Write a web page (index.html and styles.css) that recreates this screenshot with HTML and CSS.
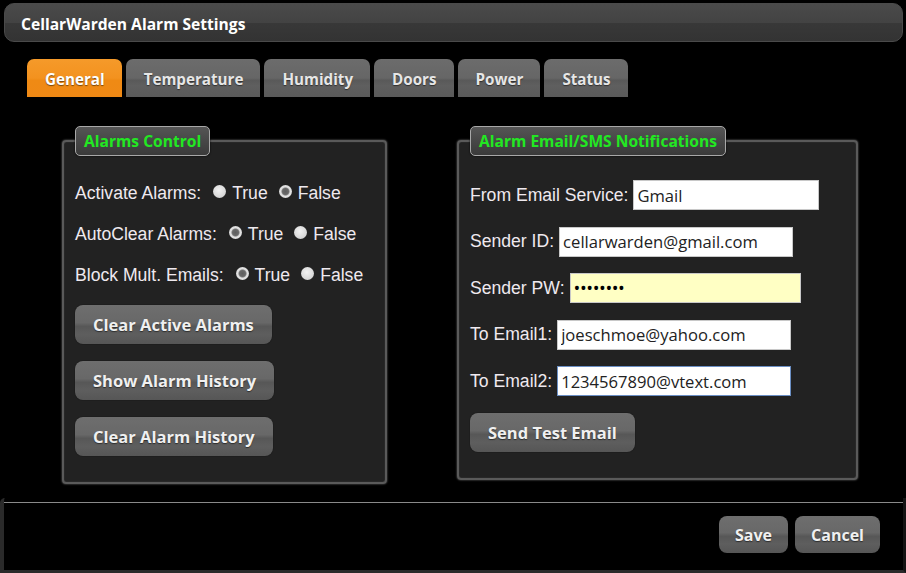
FILE: index.html
```html
<!DOCTYPE html>
<html>
<head>
<meta charset="utf-8">
<title>CellarWarden Alarm Settings</title>
<link rel="stylesheet" href="styles.css">
</head>
<body>
<div class="window">
  <div class="titlebar">CellarWarden Alarm Settings</div>
  <div class="tabs">
    <div class="tab active">General</div>
    <div class="tab">Temperature</div>
    <div class="tab">Humidity</div>
    <div class="tab">Doors</div>
    <div class="tab">Power</div>
    <div class="tab">Status</div>
  </div>
  <div class="panels">
    <fieldset class="group group-left">
      <legend>Alarms Control</legend>
      <div class="rows rows-left">
        <div class="row">
          <span class="lbl">Activate Alarms:</span>
          <label class="opt"><input type="radio" name="act"><span>True</span></label>
          <label class="opt"><input type="radio" name="act" checked><span>False</span></label>
        </div>
        <div class="row">
          <span class="lbl">AutoClear Alarms:</span>
          <label class="opt"><input type="radio" name="ac" checked><span>True</span></label>
          <label class="opt"><input type="radio" name="ac"><span>False</span></label>
        </div>
        <div class="row">
          <span class="lbl">Block Mult. Emails:</span>
          <label class="opt"><input type="radio" name="bm" checked><span>True</span></label>
          <label class="opt"><input type="radio" name="bm"><span>False</span></label>
        </div>
      </div>
      <div class="btns">
        <button class="btn">Clear Active Alarms</button>
        <button class="btn">Show Alarm History</button>
        <button class="btn">Clear Alarm History</button>
      </div>
    </fieldset>
    <fieldset class="group group-right">
      <legend>Alarm Email/SMS Notifications</legend>
      <div class="rows rows-right">
        <div class="row"><span class="lbl">From Email Service:</span><input class="txt w186" type="text" value="Gmail"></div>
        <div class="row"><span class="lbl">Sender ID:</span><input class="txt w234" type="text" value="cellarwarden@gmail.com"></div>
        <div class="row"><span class="lbl">Sender PW:</span><input class="txt pw w231" type="password" value="password"></div>
        <div class="row"><span class="lbl">To Email1:</span><input class="txt w234" type="text" value="joeschmoe@yahoo.com"></div>
        <div class="row"><span class="lbl">To Email2:</span><input class="txt focus w234" type="text" value="1234567890@vtext.com"></div>
      </div>
      <button class="btn send">Send Test Email</button>
    </fieldset>
  </div>
  <div class="footer">
    <div class="footer-bar">
      <button class="btn small">Save</button>
      <button class="btn small">Cancel</button>
    </div>
  </div>
</div>
</body>
</html>
```

FILE: styles.css
```css
* { box-sizing: border-box; }
html, body { margin: 0; padding: 0; background: #000; }
.window {
  width: 906px;
  height: 573px;
  background: #000;
  display: flex;
  flex-direction: column;
  overflow: hidden;
  font-family: "Liberation Sans", Arial, sans-serif;
}
.titlebar {
  margin: 3px 3px 0 4px;
  height: 39px;
  border-radius: 10px;
  border: 1px solid #4a4a4a;
  background: linear-gradient(#4a4a4a 0%, #434343 50%, #383838 52%, #333 100%);
  color: #fff;
  font-family: "Open Sans", sans-serif;
  font-weight: 700;
  font-size: 15.6px;
  padding-left: 16px;
  display: flex;
  align-items: center;
  padding-top: 2px;
}
.tabs {
  display: flex;
  gap: 4px;
  margin-top: 17px;
  padding-left: 27px;
}
.tab {
  height: 38px;
  padding: 0 17px 0 18px;
  border-radius: 7px 7px 0 0;
  background: linear-gradient(#6c6c6c 0%, #666 50%, #595959 56%, #5f5f5f 70%, #5a5a5a 100%);
  color: #e6e6e6;
  font-family: "Open Sans", sans-serif;
  font-weight: 700;
  font-size: 15.2px;
  display: flex;
  align-items: center;
  padding-top: 2px;
  text-shadow: 0 1px 1px rgba(0,0,0,0.5);
}
.tab.active {
  background: linear-gradient(#f59a2a 0%, #f3921f 50%, #ef8a14 56%, #ef8915 100%);
  color: #fff;
}
.panels {
  display: flex;
  align-items: flex-start;
  gap: 70px;
  padding-left: 62px;
  margin-top: 29px;
  height: 359px;
}
.group {
  margin: 0;
  border: 2px solid #5a5a5a;
  border-radius: 4px;
  background: #222;
  box-shadow: 0 0 2px #7a7a7a, inset 0 0 1px #666;
  padding: 22px 11px 26px 11px;
  min-width: 0;
  display: flex;
  flex-direction: column;
  align-items: flex-start;
}
.group-left { width: 325px; }
.group-right { width: 401px; padding-top: 24px; }
legend {
  height: 30px;
  padding: 0 8px;
  border: 1px solid #a8a8a8;
  border-radius: 5px;
  background: linear-gradient(#555 0%, #474747 50%, #3a3a3a 100%);
  color: #22e822;
  font-family: "Open Sans", sans-serif;
  font-weight: 700;
  font-size: 15.6px;
  line-height: 29px;
  box-shadow: 0 0 2px #000;
}
.rows { display: flex; flex-direction: column; }
.rows-left { gap: 11px; }
.rows-right { gap: 16.5px; }
.row {
  height: 30px;
  display: flex;
  align-items: center;
  color: #efe9ef;
  font-size: 17.6px;
  white-space: nowrap;
}
.rows-right .row { gap: 5px; }
.opt {
  display: flex;
  align-items: center;
  gap: 6px;
  margin-left: 11px;
}
.lbl + .opt { margin-left: 12px; }
.opt input[type="radio"] {
  appearance: none;
  -webkit-appearance: none;
  margin: 0;
  width: 13px;
  height: 13px;
  border-radius: 50%;
  background: radial-gradient(circle at 45% 40%, #f2f2f2 0%, #dadada 60%, #c4c4c4 100%);
  border: none;
  position: relative;
  top: -2px;
}
.opt input[type="radio"]:checked {
  background: radial-gradient(circle, #5e5e5e 0, #6a6a6a 3px, #888 3.6px, #e4e4e4 4.6px, #d0d0d0 100%);
}
.btns {
  display: flex;
  flex-direction: column;
  align-items: flex-start;
  gap: 17px;
  margin-top: 15px;
}
.btn {
  height: 39px;
  padding: 0 18px;
  border: none;
  border-radius: 8px;
  background: linear-gradient(#6e6e6e 0%, #686868 45%, #575757 55%, #5e5e5e 75%, #565656 100%);
  color: #f0f0f0;
  font-family: "Open Sans", sans-serif;
  font-weight: 700;
  font-size: 16.5px;
  text-shadow: 0 1px 1px rgba(0,0,0,0.5);
  box-shadow: 0 0 1px #000;
  cursor: pointer;
  white-space: nowrap;
}
.send { margin-top: 17px; }
.txt {
  height: 30px;
  border: 1px solid #c8c8c8;
  background: #fff;
  color: #222;
  font-family: "Open Sans", sans-serif;
  font-size: 16.6px;
  padding: 0 3px;
  outline: none;
  margin: 0;
}
.txt.pw { background: #ffffc4; font-size: 18px; letter-spacing: -0.4px; color: #000; }
.txt.focus { border: 1px solid #6b8fc4; }
.w186 { width: 186px; }
.w231 { width: 231px; }
.w234 { width: 234px; }
.footer {
  margin-top: 13px;
  flex: 1;
  border-left: 4px solid #2a2a2a;
  border-right: 3px solid #141414;
  border-bottom: 3px solid #2a2a2a;
  border-radius: 5px 0 0 0;
  padding-top: 4px;
}
.footer-bar {
  border-top: 1px solid #8a8a8a;
  display: flex;
  justify-content: flex-end;
  gap: 7px;
  padding: 13px 23px 0 0;
}
.btn.small { height: 37px; padding: 0 16px; font-size: 16px; }
```
